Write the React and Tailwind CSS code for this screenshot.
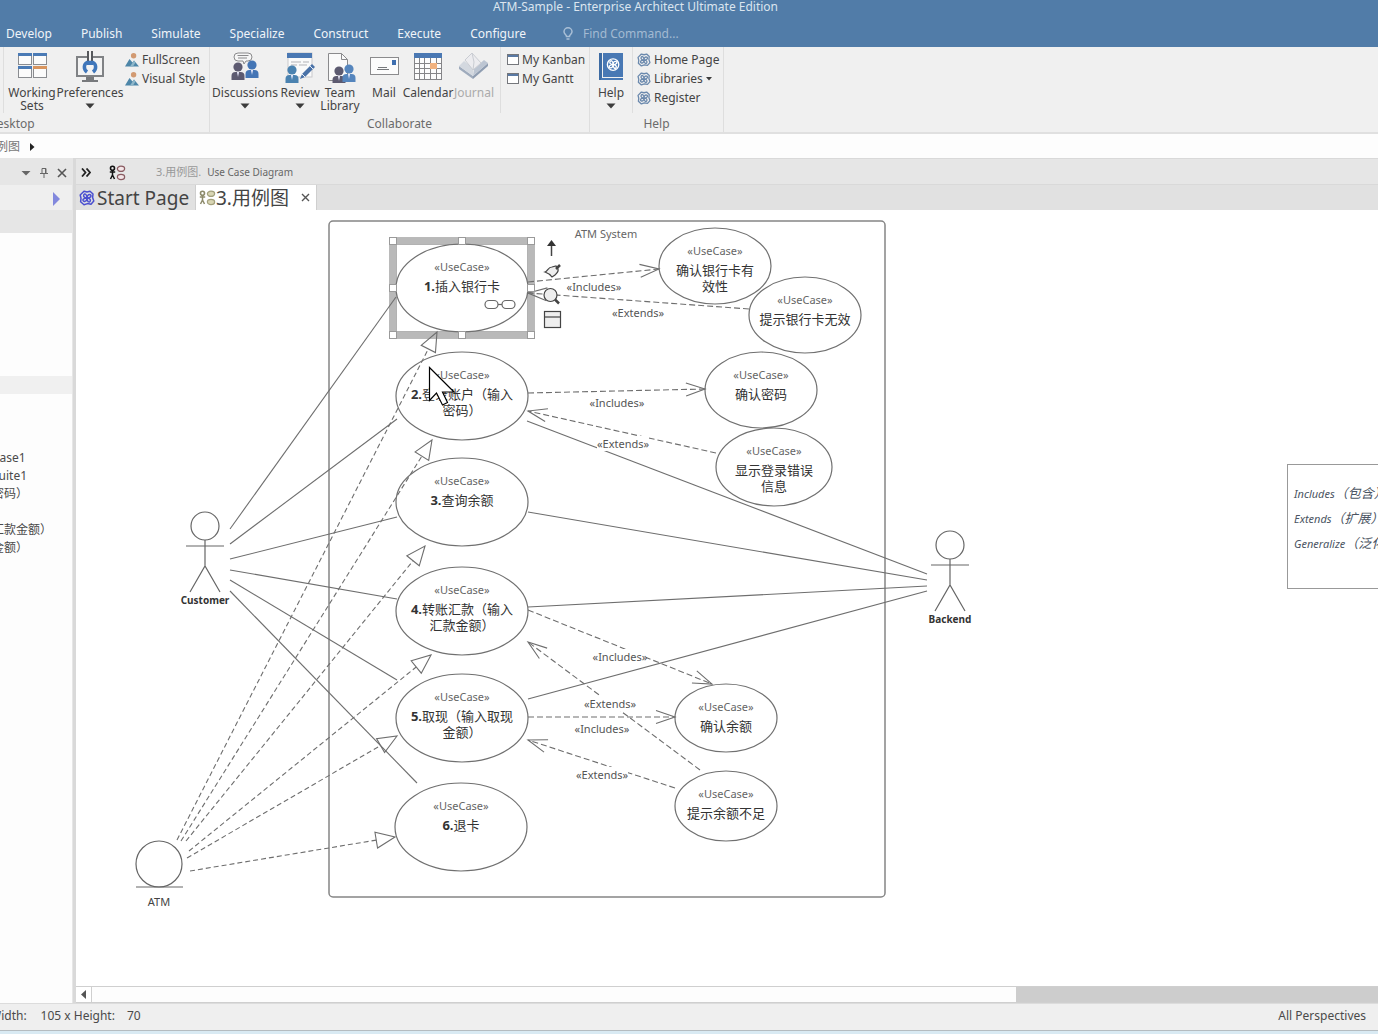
import React, { useState } from 'react';

const MENUS = ['Develop', 'Publish', 'Simulate', 'Specialize', 'Construct', 'Execute', 'Configure'];

// Use case ellipses, in diagram units
const USE_CASES = [
  { cx: 462, cy: 288, rx: 66, ry: 44, num: '1.', lines: ['插入银行卡'] },
  { cx: 462, cy: 396, rx: 66, ry: 44, num: '2.', lines: ['登录账户（输入', '密码）'] },
  { cx: 462, cy: 502, rx: 66, ry: 44, num: '3.', lines: ['查询余额'] },
  { cx: 462, cy: 611, rx: 66, ry: 44, num: '4.', lines: ['转账汇款（输入', '汇款金额）'] },
  { cx: 462, cy: 718, rx: 66, ry: 44, num: '5.', lines: ['取现（输入取现', '金额）'] },
  { cx: 461, cy: 827, rx: 66, ry: 44, num: '6.', lines: ['退卡'] },
  { cx: 715, cy: 266, rx: 56, ry: 38, lines: ['确认银行卡有', '效性'] },
  { cx: 805, cy: 315, rx: 56, ry: 38, lines: ['提示银行卡无效'] },
  { cx: 761, cy: 390, rx: 56, ry: 38, lines: ['确认密码'] },
  { cx: 774, cy: 467, rx: 58, ry: 39, lines: ['显示登录错误', '信息'] },
  { cx: 726, cy: 718, rx: 51, ry: 34, lines: ['确认余额'] },
  { cx: 726, cy: 806, rx: 51, ry: 35, lines: ['提示余额不足'] },
];

const ASSOCIATIONS = [
  [230, 529, 396, 297],
  [230, 544, 397, 419],
  [230, 559, 397, 517],
  [230, 570, 397, 599],
  [230, 580, 397, 680],
  [230, 591, 417, 783],
  [527, 421, 927, 574],
  [528, 512, 927, 580],
  [528, 607, 927, 586],
  [528, 699, 927, 591],
];

const GENERALIZATIONS = [
  [177, 840, 437, 332],
  [181, 841, 432, 440],
  [186, 841, 425, 546],
  [189, 851, 431, 655],
  [187, 858, 397, 736],
  [190, 871, 395, 837],
];

const DEPENDENCIES = [
  [528, 282, 659, 269],
  [749, 309, 528, 293],
  [528, 393, 705, 389],
  [716, 453, 528, 411],
  [528, 610, 712, 684],
  [700, 770, 528, 642],
  [528, 717, 675, 717],
  [675, 788, 528, 740],
];

const LINK_LABELS = [
  [594, 287, '«Includes»'],
  [638, 313, '«Extends»'],
  [617, 403, '«Includes»'],
  [623, 444, '«Extends»'],
  [620, 657, '«Includes»'],
  [610, 704, '«Extends»'],
  [602, 729, '«Includes»'],
  [602, 775, '«Extends»'],
];

const HANDLES = [
  [393, 241], [462, 241], [531, 241],
  [393, 288], [531, 288],
  [393, 335], [462, 335], [531, 335],
];

const TREE = ['Case1', 'Suite1', '密码）', '', '汇款金额）', '金额）'];

const LEGEND = [
  [498, 'Includes', '（包含）'],
  [523, 'Extends', '（扩展）'],
  [548, 'Generalize', '（泛化）'],
];

// The two points `len` behind the tip, `half` to each side of the line
function arrowPoints([x1, y1, x2, y2], len, half) {
  const d = Math.hypot(x2 - x1, y2 - y1);
  const ux = (x2 - x1) / d;
  const uy = (y2 - y1) / d;
  const bx = x2 - ux * len;
  const by = y2 - uy * len;
  return { bx, by, ax: bx - uy * half, ay: by + ux * half, cx: bx + uy * half, cy: by - ux * half };
}

function Caret() {
  return (
    <svg width="10" height="6" viewBox="0 0 10 6" className="mt-1">
      <path d="M.5 .5h9L5 5.500z" fill="#3c3c3c" />
    </svg>
  );
}

// Ring with four interlocking loops
function SwirlIcon({ size = 14, color = '#6b89ad' }) {
  return (
    <svg width={size} height={size} viewBox="0 0 16 16" className="shrink-0" fill="none" stroke={color} strokeWidth="1.500">
      <path d="M5 1.200 8 2l3-.8 3 2.800-.4 3.500L14.800 11 12 14.200l-3.500-.6L5 14.800l-3.400-3L2 8.300 1.200 5z" strokeLinejoin="round" />
      <path d="M8 8C5.500 8 4 6.500 4.800 4.800S8 4 8 8zM8 8c0-2.500 1.500-4 3.200-3.200S12 8 8 8zM8 8c2.500 0 4 1.500 3.200 3.200S8 12 8 8zM8 8c0 2.500-1.500 4-3.200 3.200S4 8 8 8z" />
    </svg>
  );
}

function PictureIcon() {
  return (
    <svg width="14" height="14" viewBox="0 0 14 14" className="shrink-0">
      <circle cx="8.600" cy="2.800" r="2.700" fill="#d29a72" />
      <path d="M0 13.500 4.500 6l3 3.500L9 7.500l5 6z" fill="#4d86a8" />
      <path d="m5 13.500 4-6 1.500 2-2.500 4z" fill="#8fb7ca" />
    </svg>
  );
}

function WindowIcon() {
  return (
    <svg width="12" height="11" viewBox="0 0 12 11" className="shrink-0">
      <rect x=".5" y=".5" width="11" height="10" fill="#fff" stroke="#75777c" />
      <path d="M1 1h10v2H1z" fill="#5a7aa5" />
    </svg>
  );
}

function UseCaseIcon({ muted }) {
  const line = muted ? '#8d8b6c' : '#111';
  const oval = muted ? '#a3a07c' : '#8a5c62';
  return (
    <svg width="17" height="16" viewBox="0 0 17 16" className="shrink-0" fill="none">
      <circle cx="3.500" cy="3.200" r="2" stroke={line} strokeWidth="1.600" />
      <path d="M3.500 5v5M.8 7h5.400M3.500 10l-2 4M3.500 10l2 4" stroke={line} strokeWidth="1.500" />
      <ellipse cx="12" cy="3.800" rx="3.600" ry="2.600" stroke={oval} strokeWidth="1.300" fill={muted ? '#d9d6b4' : '#f3e6e8'} />
      <ellipse cx="12" cy="12" rx="3.600" ry="2.600" stroke={oval} strokeWidth="1.300" fill={muted ? '#d9d6b4' : '#f3e6e8'} />
    </svg>
  );
}

function WorkingSetsIcon() {
  return (
    <svg width="32" height="32" viewBox="0 0 32 32">
      {[[2, 2], [17, 2], [2, 15], [17, 15]].map(([x, y], i) => (
        <g key={i}>
          <rect x={x + 0.5} y={y + 0.5} width="13" height="11" fill="#fbfbfb" stroke="#8a8c90" />
          <rect x={x} y={y} width="14" height="3" fill={i === 3 ? '#d8955f' : '#4a7ab5'} />
        </g>
      ))}
    </svg>
  );
}

function PreferencesIcon() {
  return (
    <svg width="32" height="32" viewBox="0 0 32 32">
      <rect x="3" y="6" width="26" height="19" fill="#f3f3f3" stroke="#808285" strokeWidth="2" />
      <path d="M12 26h8v3h4v2H8v-2h4z" fill="#77797c" />
      <path d="M13 0h6v11h-6z" fill="#f3f3f3" />
      <path d="M14 0v11M18 0v11" stroke="#56585c" strokeWidth="2" />
      <path d="M13 21c-4-3-3-8 0-9.500h6c3 1.500 4 6.500 0 9.500" fill="none" stroke="#3f76ba" strokeWidth="3.500" />
      <path d="M13 10h6v4h-6z" fill="#3f76ba" />
    </svg>
  );
}

function Person({ x, y, color }) {
  return (
    <g fill={color}>
      <circle cx={x} cy={y} r="4.600" />
      <path d={`M${x - 6.5} ${y + 13}v-4q0-4 4-4h5q4 0 4 4v4z`} />
      <path d={`M${x - 1} ${y + 5}l1 5 1-5z`} fill="#eef" />
    </g>
  );
}

function DiscussionsIcon() {
  return (
    <svg width="32" height="32" viewBox="0 0 32 32">
      <path d="M9 2h10a4 4 0 0 1 0 8h-2l-2 3-1-3H9a4 4 0 0 1 0-8z" fill="#f6f6f6" stroke="#8a8a8c" />
      <path d="M8.500 4.500h11M9 7h9" stroke="#8a8a8c" />
      <Person x={9} y={16} color="#5c5a70" />
      <Person x={23} y={14} color="#4475b5" />
    </svg>
  );
}

function ReviewIcon() {
  return (
    <svg width="32" height="32" viewBox="0 0 32 32">
      <rect x="4" y="2" width="24" height="24" fill="#fafafa" stroke="#c9c9cc" />
      <rect x="3" y="2" width="25" height="5" fill="#4a78b3" />
      <path d="M7 11h10M19 11h6M7 14h6M15 14h8" stroke="#b3b3b7" />
      <Person x={8} y={19} color="#4a82b0" />
      <path d="m16 28 2-5 10-10 3 3-10 10z" fill="#4a72a8" />
      <path d="m18 23 3 3M26 15l3 3" stroke="#e8eef6" />
    </svg>
  );
}

function TeamLibraryIcon() {
  return (
    <svg width="32" height="32" viewBox="0 0 32 32">
      <path d="M4.500 2.500h13l6 6v21h-19z" fill="#fafafa" stroke="#8a8a8c" />
      <path d="M17.500 2.500v6h6" fill="none" stroke="#8a8a8c" />
      <Person x={15} y={20} color="#5c5a70" />
      <Person x={25} y={18} color="#5585bd" />
    </svg>
  );
}

function MailIcon() {
  return (
    <svg width="32" height="32" viewBox="0 0 32 32">
      <rect x="2.500" y="6.500" width="28" height="17" fill="#fcfcfc" stroke="#8b8b8d" />
      <rect x="24" y="9" width="4" height="5" fill="#3f6fb0" />
      <path d="M10 16.500h9M9 18.500h12" stroke="#77797c" />
    </svg>
  );
}

function CalendarIcon() {
  return (
    <svg width="32" height="32" viewBox="0 0 32 32">
      <rect x="2.500" y="2.500" width="27" height="26" fill="#fcfcfc" stroke="#858588" />
      <rect x="2" y="2" width="28" height="5" fill="#4a78b3" />
      <path d="M2 12.500h28M2 17.500h28M2 22.500h28M7.500 7v22M12.500 7v22M18.500 7v22M24.500 7v22" stroke="#858588" />
      <rect x="18" y="12" width="7" height="6" fill="#f1b27f" />
    </svg>
  );
}

function JournalIcon() {
  return (
    <svg width="32" height="32" viewBox="0 0 32 32">
      <path d="m1 15 14 10v3L1 18z" fill="#9fabbc" />
      <path d="m15 25 15-13v3L15 28z" fill="#8f9db1" />
      <path d="m1 15 5-5 9 7v8z" fill="#d3d8df" />
      <path d="m15 25 1-7 10-9 4 3z" fill="#bcc5d2" />
      <path d="m7 9 7-7 9 10-8 7z" fill="#ececef" stroke="#c9ccd2" />
      <path d="m14 2 2 9-1 8" fill="none" stroke="#c9ccd2" />
    </svg>
  );
}

function HelpBookIcon() {
  return (
    <svg width="32" height="32" viewBox="0 0 32 32">
      <rect x="4" y="2" width="3" height="27" fill="#3d6ba3" />
      <rect x="8" y="2" width="20" height="24" fill="#4878b4" />
      <path d="M6 28h22" stroke="#4878b4" strokeWidth="2" />
      <g transform="translate(10 6) scale(.95)" fill="none" stroke="#fff" strokeWidth="1.400">
        <circle cx="8.500" cy="8" r="6" />
        <path d="M8.500 8C6 8 4.500 6.500 5.300 4.800S8.500 4 8.500 8zM8.500 8c0-2.500 1.500-4 3.200-3.200S12.500 8 8.500 8zM8.500 8c2.500 0 4 1.500 3.200 3.200S8.500 12 8.500 8zM8.500 8c0 2.500-1.500 4-3.200 3.200S4.500 8 8.500 8z" />
      </g>
    </svg>
  );
}

function BigButton({ icon, label, second, caret, disabled, width }) {
  return (
    <button type="button" disabled={disabled} className={`flex shrink-0 flex-col items-center pt-1 ${width} ${disabled ? 'text-[#ababab]' : ''}`}>
      {icon}
      <span className="mt-[3px] whitespace-nowrap">{label}</span>
      {second && <span className="whitespace-nowrap">{second}</span>}
      {caret && <Caret />}
    </button>
  );
}

function SmallButton({ icon, label, caret }) {
  return (
    <button type="button" className="flex h-[19px] items-center gap-[3px] whitespace-nowrap">
      {icon}
      <span>{label}</span>
      {caret && (
        <svg width="6" height="4" viewBox="0 0 6 4">
          <path d="M0 0h6L3 3.500z" fill="#3c3c3c" />
        </svg>
      )}
    </button>
  );
}

function RibbonGroup({ title, width, children }) {
  return (
    <div className={`flex shrink-0 flex-col border-r border-[#dedede] ${width}`}>
      <div className="flex h-[66px]">{children}</div>
      <div className="pt-1 text-center text-[#6b6b6b]">{title}</div>
    </div>
  );
}

function Ribbon() {
  return (
    <div className="flex h-[87px] shrink-0 overflow-hidden border-b-2 border-[#e0e0e0] bg-[#f0f0f0] text-xs leading-[13px] text-[#444]">
      <div className="flex w-[210px] shrink-0 flex-col border-r border-[#dedede]">
        <div className="flex h-[66px]">
          <div className="mr-1 w-1 border-r border-[#dedede]" />
          <BigButton icon={<WorkingSetsIcon />} label="Working" second="Sets" width="w-12" />
          <BigButton icon={<PreferencesIcon />} label="Preferences" caret width="w-[68px]" />
          <div className="flex flex-col pt-[3px] pl-px">
            <SmallButton icon={<PictureIcon />} label="FullScreen" />
            <SmallButton icon={<PictureIcon />} label="Visual Style" />
          </div>
        </div>
        <div className="-ml-3 pt-1 text-[#6b6b6b]">Desktop</div>
      </div>

      <RibbonGroup title="Collaborate" width="w-[380px]">
        <BigButton icon={<DiscussionsIcon />} label="Discussions" caret width="w-[70px]" />
        <BigButton icon={<ReviewIcon />} label="Review" caret width="w-10" />
        <BigButton icon={<TeamLibraryIcon />} label="Team" second="Library" width="w-10" />
        <BigButton icon={<MailIcon />} label="Mail" width="w-12" />
        <BigButton icon={<CalendarIcon />} label="Calendar" width="w-10" />
        <BigButton icon={<JournalIcon />} label="Journal" disabled width="w-[52px]" />
        <div className="flex flex-col border-l border-[#dedede] pt-[3px] pl-1.5">
          <SmallButton icon={<WindowIcon />} label="My Kanban" />
          <SmallButton icon={<WindowIcon />} label="My Gantt" />
        </div>
      </RibbonGroup>

      <RibbonGroup title="Help" width="w-[134px]">
        <BigButton icon={<HelpBookIcon />} label="Help" caret width="w-[42px]" />
        <div className="flex flex-col border-l border-[#dedede] pt-[3px] pl-1">
          <SmallButton icon={<SwirlIcon />} label="Home Page" />
          <SmallButton icon={<SwirlIcon />} label="Libraries" caret />
          <SmallButton icon={<SwirlIcon />} label="Register" />
        </div>
      </RibbonGroup>
    </div>
  );
}

function Sidebar() {
  return (
    <aside className="flex w-[73px] shrink-0 flex-col overflow-hidden border-r border-[#e6e6e6] bg-[#fdfdfd] text-xs text-[#4a4a4a]">
      <div className="flex h-[27px] shrink-0 items-center justify-end gap-2 bg-[#e6e6e6] pt-0.5 pr-[5px]">
        <svg width="10" height="6" viewBox="0 0 10 6"><path d="M.5 1h9L5 5.500z" fill="#666" /></svg>
        <button type="button" aria-label="Pin">
          <svg width="10" height="12" viewBox="0 0 10 12" fill="none" stroke="#666"><path d="M3 1.500h4v5H3zM6.500 1v6M1 6.500h8M5 7v4" /></svg>
        </button>
        <button type="button" aria-label="Close panel">
          <svg width="10" height="10" viewBox="0 0 10 10"><path d="m1 1 8 8M9 1 1 9" stroke="#555" strokeWidth="1.600" /></svg>
        </button>
      </div>
      <div className="flex h-[25px] shrink-0 items-center justify-end bg-[#efefef] pt-0.5 pr-3">
        <svg width="7" height="14" viewBox="0 0 7 14"><path d="M0 0v14l7-7z" fill="#8288dd" /></svg>
      </div>
      <div className="h-[23px] shrink-0 bg-[#e6e6e6]" />
      <div className="h-[143px] shrink-0" />
      <div className="h-[18px] shrink-0 bg-[#f0f0f0]" />
      <ul className="-ml-2 pt-[55px] leading-[18px] whitespace-nowrap">
        {TREE.map((item, i) => (
          <li key={i} className="h-[18px]">{item}</li>
        ))}
      </ul>
    </aside>
  );
}

function Actor({ x, y, name }) {
  return (
    <g>
      <g fill="none" stroke="#666" strokeWidth="1.200">
        <circle cx={x} cy={y} r="14" />
        <path d={`M${x} ${y + 14}v26M${x - 19} ${y + 20}h38M${x - 15} ${y + 66}l15-26 15 26`} />
      </g>
      <text x={x} y={y + 78} className="text-[10px] font-bold" fill="#333">{name}</text>
    </g>
  );
}

function UseCase({ cx, cy, rx, ry, num, lines }) {
  const top = cy - ry + 27;
  return (
    <g>
      <ellipse cx={cx} cy={cy} rx={rx} ry={ry} fill="none" stroke="#707070" strokeWidth="1.200" />
      <text x={cx} y={top} fill="#666">«UseCase»</text>
      {lines.map((line, i) => (
        <text key={line} x={cx} y={top + 20 + i * 16} className="text-[13px]" fill="#333">
          {i === 0 && num && <tspan className="font-bold">{num}</tspan>}
          {line}
        </text>
      ))}
    </g>
  );
}

function Diagram() {
  return (
    <svg className="absolute inset-0 h-full w-full font-['Noto_Sans','Noto_Sans_CJK_SC',sans-serif] text-[11px]" role="img" aria-label="Use Case Diagram">
      <g transform="translate(-76 -210)" textAnchor="middle" fill="#444">
        <rect x="329" y="221" width="556" height="676" rx="4" fill="none" stroke="#858585" strokeWidth="1.500" />
        <text x="606" y="238" fill="#666">ATM System</text>

        {/* selection frame */}
        <rect x="393" y="241" width="138" height="94" fill="none" stroke="#b9b9b9" strokeWidth="7" />
        <rect x="396.500" y="244.500" width="131" height="87" fill="none" stroke="#888" strokeDasharray="1 1" />
        <rect x="389.500" y="237.500" width="145" height="101" fill="none" stroke="#999" strokeDasharray="1 1" />

        {USE_CASES.map((u) => (
          <UseCase key={u.cy + '-' + u.cx} {...u} />
        ))}
        <g fill="none" stroke="#666" strokeWidth="1.200">
          <rect x="485" y="300.500" width="13" height="8" rx="4" />
          <rect x="502" y="300.500" width="13" height="8" rx="4" />
          <path d="M498 304.500h4" />
        </g>

        <g fill="none" stroke="#6e6e6e" strokeWidth="1.100">
          {ASSOCIATIONS.map(([x1, y1, x2, y2], i) => (
            <line key={i} x1={x1} y1={y1} x2={x2} y2={y2} />
          ))}
          {GENERALIZATIONS.map((link, i) => {
            const p = arrowPoints(link, 19, 8);
            return (
              <g key={i}>
                <line x1={link[0]} y1={link[1]} x2={p.bx} y2={p.by} strokeDasharray="5 3" />
                <path d={`M${link[2]} ${link[3]}L${p.ax} ${p.ay}L${p.cx} ${p.cy}z`} />
              </g>
            );
          })}
          {DEPENDENCIES.map((link, i) => {
            const p = arrowPoints(link, 19, 6.5);
            return (
              <g key={i}>
                <line x1={link[0]} y1={link[1]} x2={link[2]} y2={link[3]} strokeDasharray="6 3" />
                <path d={`M${p.ax} ${p.ay}L${link[2]} ${link[3]}L${p.cx} ${p.cy}`} />
              </g>
            );
          })}
        </g>

        {LINK_LABELS.map(([x, y, label]) => (
          <g key={x + '-' + y}>
            <rect x={x - 26} y={y - 8} width="52" height="15" fill="#fff" />
            <text x={x} y={y + 4} fill="#555">{label}</text>
          </g>
        ))}

        {HANDLES.map(([x, y]) => (
          <rect key={x + '-' + y} x={x - 3.5} y={y - 3.5} width="7" height="7" fill="#fff" stroke="#9a9a9a" />
        ))}

        {/* quick link tools beside the selected element */}
        <g fill="none" stroke="#444" strokeWidth="1.200">
          <path d="M551.500 256v-12" strokeWidth="1.500" />
          <path d="m547 246 4.500-6 4.500 6z" fill="#333" stroke="none" />
          <path d="M545 272c3-1 3-5 7-5l4-1 2 3c1 4-2 4-3 6l-3 2c-2-3-4-4-7-5z" fill="#eee" />
          <path d="m556 269 4-4" strokeWidth="2.500" />
          <circle cx="550.500" cy="295" r="6.500" fill="#eee" />
          <path d="m555 299.500 4 4" strokeWidth="2.500" />
          <rect x="544.500" y="311.500" width="16" height="16" fill="#eee" />
          <path d="M545 317h15" />
        </g>

        <Actor x={205} y={526} name="Customer" />
        <Actor x={950} y={545} name="Backend" />
        <g fill="none" stroke="#666" strokeWidth="1.200">
          <circle cx="159" cy="864" r="23" />
          <path d="M136 887h47" />
        </g>
        <text x="159" y="906">ATM</text>

        <g textAnchor="start" className="italic" fill="#4b5563">
          <rect x="1287.500" y="464.500" width="180" height="124" fill="#fff" stroke="#999" />
          {LEGEND.map(([y, term, meaning]) => (
            <text key={term} x="1294" y={y}>
              {term}
              <tspan className="text-[13px]">{meaning}</tspan>
            </text>
          ))}
        </g>

        <path d="M429.500 367.500v33l7-7.500 6 12 5-2.500-5-10.500h11.500z" fill="#fff" stroke="#000" strokeWidth="1.200" />
      </g>
    </svg>
  );
}

export default function App() {
  const [command, setCommand] = useState('');

  return (
    <div className="flex h-screen flex-col overflow-hidden bg-white font-['Noto_Sans','Noto_Sans_CJK_SC',sans-serif]">
      <header className="h-[47px] shrink-0 bg-[#517ca8] text-xs text-[#f0f4f9]">
        <div className="h-5 pl-[493px] leading-[14px] whitespace-nowrap text-[#dbe5ef]">ATM-Sample - Enterprise Architect Ultimate Edition</div>
        <nav className="flex h-[27px] items-center gap-[29px] pl-1.5">
          {MENUS.map((m) => (
            <button key={m} type="button">{m}</button>
          ))}
          <label className="ml-2 flex items-center gap-2.5">
            <svg width="10" height="14" viewBox="0 0 10 14" fill="none" stroke="#a9bfd6" strokeWidth="1.500" aria-label="Find Command">
              <path d="M3.500 9.500C3.500 8 1 7 1 4.800a4 4 0 0 1 8 0C9 7 6.500 8 6.500 9.500zM3.500 12h3" />
            </svg>
            <input
              type="text"
              value={command}
              onChange={(e) => setCommand(e.target.value)}
              placeholder="Find Command..."
              className="w-40 bg-transparent outline-none placeholder:text-[#a3bad2]"
            />
          </label>
        </nav>
      </header>

      <Ribbon />

      <div className="-ml-1 flex h-6 shrink-0 items-center gap-2.5 bg-[#fdfdfd] pt-0.5 text-xs text-[#777]">
        例图
        <svg width="5" height="8" viewBox="0 0 5 8"><path d="M0 0v8l4.500-4z" fill="#222" /></svg>
      </div>

      <div className="flex min-h-0 flex-1 bg-[#d9d9d9]">
        <Sidebar />
        <main className="ml-[3px] flex min-w-0 flex-1 flex-col">
          <div className="flex h-[27px] shrink-0 items-center border-t border-b border-[#d9d9d9] bg-[#e6e6e6] pt-0.5 text-[11px] text-[#666]">
            <button type="button" aria-label="Expand" className="ml-[5px]">
              <svg width="10" height="9" viewBox="0 0 10 9" fill="none" stroke="#222" strokeWidth="1.800"><path d="m1 .5 3.500 4L1 8.500M5.500.5 9 4.500l-3.500 4" /></svg>
            </button>
            <span className="ml-[18px]"><UseCaseIcon /></span>
            <span className="ml-[30px] text-[#999]">3.用例图.</span>
            <span className="ml-1.5 text-[10px]">Use Case Diagram</span>
          </div>

          <div className="flex h-[25px] shrink-0 items-center bg-[#e1e1e1] text-[19px] leading-6 text-[#444]" role="tablist">
            <button type="button" role="tab" aria-selected="false" className="flex w-[119px] items-center gap-0.5 pl-[3px] whitespace-nowrap">
              <SwirlIcon size={16} color="#4a4fd0" />
              Start Page
            </button>
            <div className="flex h-full w-[122px] items-center border-r border-l border-[#cfcfcf] bg-white pr-1.5 pl-[3px]">
              <button type="button" role="tab" aria-selected="true" className="flex items-center whitespace-nowrap">
                <UseCaseIcon muted />
                3.用例图
              </button>
              <button type="button" aria-label="Close tab" className="ml-auto">
                <svg width="9" height="9" viewBox="0 0 9 9"><path d="m1 1 7 7M8 1 1 8" stroke="#555" strokeWidth="1.400" /></svg>
              </button>
            </div>
          </div>

          <div className="relative min-h-0 flex-1 overflow-hidden bg-white">
            <Diagram />
          </div>

          <div className="flex h-[17px] shrink-0 border-t border-b border-[#cfcfcf] bg-[#cdcdcd]">
            <button type="button" aria-label="Scroll left" className="flex w-4 shrink-0 items-center justify-center border-r border-[#cfcfcf] bg-white">
              <svg width="5" height="9" viewBox="0 0 5 9"><path d="M5 0v9L0 4.500z" fill="#555" /></svg>
            </button>
            <div className="w-[71%] bg-[#fdfdfd]" />
          </div>
        </main>
      </div>

      <footer className="flex h-7 shrink-0 items-center border-t border-b border-t-[#dcdcdc] border-b-[#b5bcc0] bg-[#efefef] pr-3 pb-0.5 text-xs text-[#4a4a4a]">
        <span className="-ml-2.5">Width:</span>
        <span className="ml-3.5">105 x Height:</span>
        <span className="ml-3">70</span>
        <span className="ml-auto">All Perspectives</span>
      </footer>
      <div className="h-[3px] shrink-0 bg-[#d9eaf3]" />
    </div>
  );
}
